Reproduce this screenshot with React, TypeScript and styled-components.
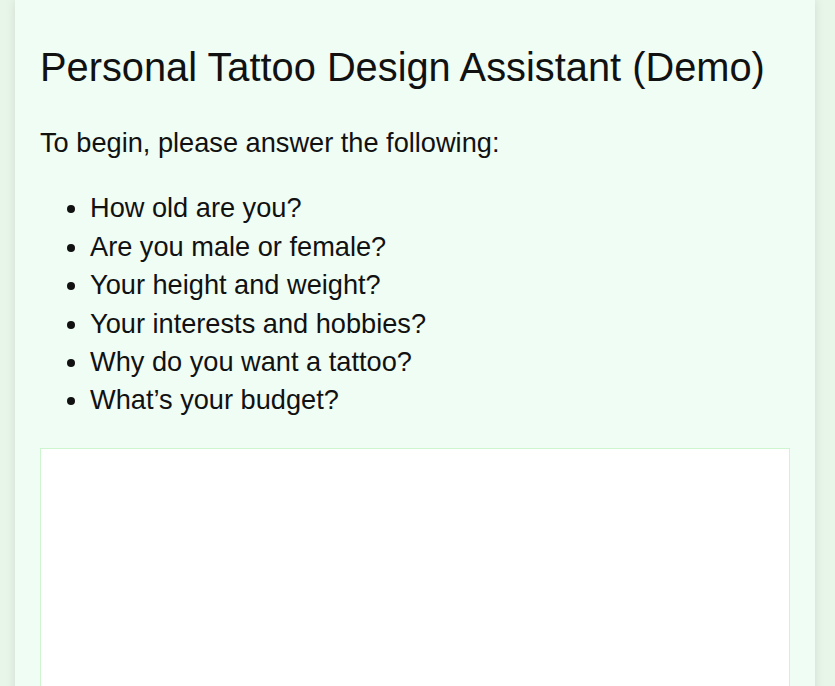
import styled, { createGlobalStyle } from 'styled-components'

const GlobalStyle = createGlobalStyle`
  html, body {
    margin: 0;
    padding: 0;
    background: #e8f5e9;
    font-family: "Liberation Sans", Arial, sans-serif;
    color: #111;
  }
`

const Card = styled.main`
  width: 800px;
  margin-left: 15px;
  box-sizing: border-box;
  padding: 20px 25px 40px;
  background: #f0fdf4;
  box-shadow: 0 0 10px rgba(0, 0, 0, 0.1);
  min-height: 686px;
`

const Title = styled.h1`
  font-size: 39.8px;
  font-weight: normal;
  margin: 23px 0 33px;
  line-height: 48px;
`

const Intro = styled.p`
  font-size: 27.2px;
  line-height: 38.4px;
  margin: 0 0 27px;
`

const Questions = styled.ul`
  font-size: 27.2px;
  line-height: 38.4px;
  margin: 0 0 28px;
  padding-left: 50px;
`

const ChatBox = styled.div`
  background: #fff;
  border: 1px solid #ccf5d0;
  height: 400px;
`

const questions = [
  'How old are you?',
  'Are you male or female?',
  'Your height and weight?',
  'Your interests and hobbies?',
  'Why do you want a tattoo?',
  'What’s your budget?',
]

function App() {
  return (
    <>
      <GlobalStyle />
      <Card>
        <Title>Personal Tattoo Design Assistant (Demo)</Title>
        <Intro>To begin, please answer the following:</Intro>
        <Questions>
          {questions.map((q) => (
            <li key={q}>{q}</li>
          ))}
        </Questions>
        <ChatBox />
      </Card>
    </>
  )
}

export default App
